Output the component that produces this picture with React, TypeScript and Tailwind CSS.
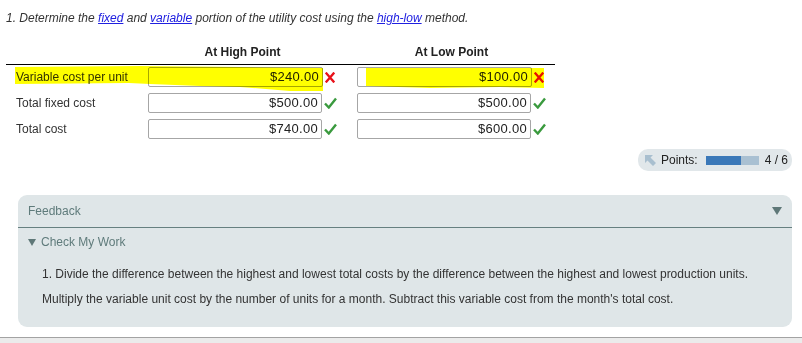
import React from 'react'

const rows = [
    { label: 'Variable cost per unit', high: '$240.00', low: '$100.00', ok: false },
    { label: 'Total fixed cost', high: '$500.00', low: '$500.00', ok: true },
    { label: 'Total cost', high: '$740.00', low: '$600.00', ok: true },
]

function Cross() {
    return (
        <svg width="10" height="11" viewBox="0 0 10 11" className="block">
            <path d="M1.5 1.5 L8.5 9.5 M8.5 1.5 L1.5 9.5" stroke="#e8111a" strokeWidth="2.4" strokeLinecap="square" />
        </svg>
    )
}

function Check() {
    return (
        <svg width="13" height="12" viewBox="0 0 13 12" className="block">
            <path d="M1 6.5 L4.8 10.5 L12 1.5" stroke="#3a9a3e" strokeWidth="2.4" fill="none" />
        </svg>
    )
}

function Cell({ value, ok }: { value: string; ok: boolean }) {
    return (
        <div className="flex items-center w-[189px]">
            <div className="w-[175px] h-[20px] border border-[#a6a6a6] rounded-[2px] bg-white flex items-center justify-end pr-[3px] text-[13px] tracking-[0.3px] text-[#222]">
                {value}
            </div>
            <div className="pl-[2px]">{ok ? <Check /> : <Cross />}</div>
        </div>
    )
}

export default function App() {
    return (
        <div
            className="w-[802px] h-[343px] relative bg-white flex flex-col overflow-hidden text-[12px] text-[#333]"
            style={{ fontFamily: '"Liberation Sans", Arial, sans-serif' }}
        >
            <p className="pt-[10px] pl-[6px] leading-[16px] italic">
                1. Determine the <span className="text-[#2020e0] underline">fixed</span> and{' '}
                <span className="text-[#2020e0] underline">variable</span> portion of the utility cost using the{' '}
                <span className="text-[#2020e0] underline">high-low</span> method.
            </p>

            <div className="ml-[6px] w-[549px] mt-[19px]">
                <div className="flex h-[20px] border-b border-black font-bold leading-[14px] text-[#222]">
                    <div className="w-[142px]" />
                    <div className="w-[189px] text-center">At High Point</div>
                    <div className="w-[20px]" />
                    <div className="w-[189px] text-center">At Low Point</div>
                </div>
                <div className="mt-[2px] flex flex-col gap-[6px]">
                    {rows.map((r) => (
                        <div key={r.label} className="flex items-center h-[20px]">
                            <div className="w-[142px] pl-[10px]">{r.label}</div>
                            <Cell value={r.high} ok={r.ok} />
                            <div className="w-[20px]" />
                            <Cell value={r.low} ok={r.ok} />
                        </div>
                    ))}
                </div>
            </div>

            <div className="flex justify-end pr-[10px] mt-[10px]">
                <div className="h-[22px] w-[154px] rounded-[10px] bg-[#e1e7ea] flex items-center pl-[7px] gap-[5px]">
                    <svg width="11" height="11" viewBox="0 0 11 11">
                        <path d="M0 0 H8 L5.5 2.5 L11 8 L8 11 L2.5 5.5 L0 8 Z" fill="#a9bfcf" />
                    </svg>
                    <span className="text-[#222]">Points:</span>
                    <div className="w-[53px] h-[9px] bg-[#a9c0d2] ml-[3px]">
                        <div className="h-full bg-[#3b78b8]" style={{ width: `${(4 / 6) * 100}%` }} />
                    </div>
                    <span className="ml-[1px] text-[#222]">4 / 6</span>
                </div>
            </div>

            <div className="ml-[18px] mr-[10px] mt-[24px] h-[132px] rounded-[9px] bg-[#dfe6e8]">
                <div className="h-[33px] border-b border-[#668080] flex items-center justify-between pl-[10px] pr-[10px] text-[#5f7b7b]">
                    <span>Feedback</span>
                    <svg width="10" height="8" viewBox="0 0 10 8">
                        <path d="M0 0 H10 L5 8 Z" fill="#5f7878" />
                    </svg>
                </div>
                <div className="pl-[10px] pt-[7px] leading-[14px] text-[#5f7b7b] flex items-center gap-[5px]">
                    <svg width="8" height="7" viewBox="0 0 8 7">
                        <path d="M0 0 H8 L4 7 Z" fill="#5f7878" />
                    </svg>
                    <span>Check My Work</span>
                </div>
                <div className="pl-[24px] pt-[13px] leading-[25px] text-[#333]">
                    <p>1. Divide the difference between the highest and lowest total costs by the difference between the highest and lowest production units.</p>
                    <p>Multiply the variable unit cost by the number of units for a month. Subtract this variable cost from the month's total cost.</p>
                </div>
            </div>

            <div className="mt-auto h-[6px] border-t border-[#a3a3a3] bg-[#ebebeb]" />

            <svg
                width="802"
                height="343"
                className="absolute left-0 top-0 pointer-events-none mix-blend-multiply"
            >
                <polygon
                    points="15,67 140,66 240,67 323,68 323,91 290,91 240,87 200,86 150,84 129,83 15,84"
                    fill="#ffff00"
                />
                <polygon points="366,68 470,68 544,68 544,88 500,87 430,88 366,86" fill="#ffff00" />
            </svg>
        </div>
    )
}
